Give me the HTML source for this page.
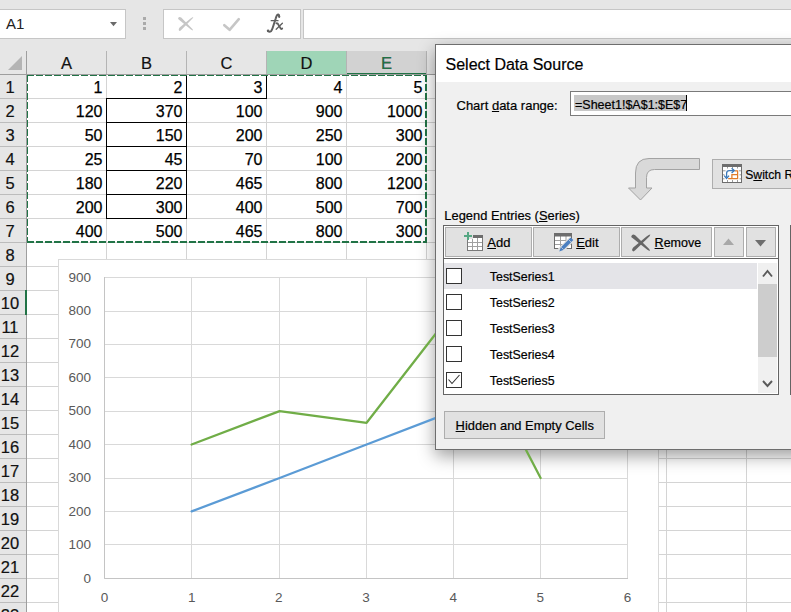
<!DOCTYPE html>
<html><head><meta charset="utf-8">
<style>
*{box-sizing:border-box;margin:0;padding:0}
html,body{width:791px;height:612px;overflow:hidden;background:#e6e6e6;font-family:"Liberation Sans",sans-serif;position:relative}
#sheet,#dlgsvg,#lines{position:absolute;left:0;top:0}
.hd{font-family:"Liberation Sans",sans-serif;font-size:16.5px;fill:#111;stroke:#111;stroke-width:0.2px}
.cv{font-family:"Liberation Sans",sans-serif;font-size:16px;fill:#000;stroke:#000;stroke-width:0.25px}
.ax{font-family:"Liberation Sans",sans-serif;font-size:13.5px;fill:#595959}
.abs{position:absolute}
.t{position:absolute;white-space:nowrap;-webkit-text-stroke:0.2px currentColor}
u{text-decoration:underline;text-underline-offset:1px;text-decoration-thickness:1px}
#namebox{position:absolute;left:-1px;top:9px;width:127px;height:30px;background:#fff;border:1px solid #c6c6c6}
#fbtns{position:absolute;left:163px;top:9px;width:138px;height:30px;background:#fff;border:1px solid #c6c6c6}
#finput{position:absolute;left:303px;top:9px;width:500px;height:30px;background:#fff;border:1px solid #c6c6c6}
#shadow{position:absolute;left:435px;top:44px;width:500px;height:406px;box-shadow:0 6px 16px rgba(0,0,0,.38)}
</style></head><body>
<svg id="sheet" width="791" height="612"><rect x="27" y="75" width="764" height="537" fill="#fff"/>
<rect x="0" y="51" width="791" height="23" fill="#e6e6e6"/>
<rect x="267" y="51" width="79" height="23" fill="#9fd5b7"/>
<rect x="347" y="51" width="79" height="23" fill="#d2d2d2"/>
<rect x="347" y="73" width="80" height="2" fill="#217346"/>
<rect x="0" y="75" width="26" height="537" fill="#e6e6e6"/>
<polygon points="8,70 22,70 22,56" fill="#b4b4b4"/>
<line x1="27" y1="98.5" x2="791" y2="98.5" stroke="#d4d4d4"/>
<line x1="0" y1="98.5" x2="26" y2="98.5" stroke="#bcbcbc"/>
<line x1="27" y1="122.5" x2="791" y2="122.5" stroke="#d4d4d4"/>
<line x1="0" y1="122.5" x2="26" y2="122.5" stroke="#bcbcbc"/>
<line x1="27" y1="146.5" x2="791" y2="146.5" stroke="#d4d4d4"/>
<line x1="0" y1="146.5" x2="26" y2="146.5" stroke="#bcbcbc"/>
<line x1="27" y1="170.5" x2="791" y2="170.5" stroke="#d4d4d4"/>
<line x1="0" y1="170.5" x2="26" y2="170.5" stroke="#bcbcbc"/>
<line x1="27" y1="194.5" x2="791" y2="194.5" stroke="#d4d4d4"/>
<line x1="0" y1="194.5" x2="26" y2="194.5" stroke="#bcbcbc"/>
<line x1="27" y1="218.5" x2="791" y2="218.5" stroke="#d4d4d4"/>
<line x1="0" y1="218.5" x2="26" y2="218.5" stroke="#bcbcbc"/>
<line x1="27" y1="242.5" x2="791" y2="242.5" stroke="#d4d4d4"/>
<line x1="0" y1="242.5" x2="26" y2="242.5" stroke="#bcbcbc"/>
<line x1="27" y1="266.5" x2="791" y2="266.5" stroke="#d4d4d4"/>
<line x1="0" y1="266.5" x2="26" y2="266.5" stroke="#bcbcbc"/>
<line x1="27" y1="290.5" x2="791" y2="290.5" stroke="#d4d4d4"/>
<line x1="0" y1="290.5" x2="26" y2="290.5" stroke="#bcbcbc"/>
<line x1="27" y1="314.5" x2="791" y2="314.5" stroke="#d4d4d4"/>
<line x1="0" y1="314.5" x2="26" y2="314.5" stroke="#bcbcbc"/>
<line x1="27" y1="338.5" x2="791" y2="338.5" stroke="#d4d4d4"/>
<line x1="0" y1="338.5" x2="26" y2="338.5" stroke="#bcbcbc"/>
<line x1="27" y1="362.5" x2="791" y2="362.5" stroke="#d4d4d4"/>
<line x1="0" y1="362.5" x2="26" y2="362.5" stroke="#bcbcbc"/>
<line x1="27" y1="386.5" x2="791" y2="386.5" stroke="#d4d4d4"/>
<line x1="0" y1="386.5" x2="26" y2="386.5" stroke="#bcbcbc"/>
<line x1="27" y1="410.5" x2="791" y2="410.5" stroke="#d4d4d4"/>
<line x1="0" y1="410.5" x2="26" y2="410.5" stroke="#bcbcbc"/>
<line x1="27" y1="434.5" x2="791" y2="434.5" stroke="#d4d4d4"/>
<line x1="0" y1="434.5" x2="26" y2="434.5" stroke="#bcbcbc"/>
<line x1="27" y1="458.5" x2="791" y2="458.5" stroke="#d4d4d4"/>
<line x1="0" y1="458.5" x2="26" y2="458.5" stroke="#bcbcbc"/>
<line x1="27" y1="482.5" x2="791" y2="482.5" stroke="#d4d4d4"/>
<line x1="0" y1="482.5" x2="26" y2="482.5" stroke="#bcbcbc"/>
<line x1="27" y1="506.5" x2="791" y2="506.5" stroke="#d4d4d4"/>
<line x1="0" y1="506.5" x2="26" y2="506.5" stroke="#bcbcbc"/>
<line x1="27" y1="530.5" x2="791" y2="530.5" stroke="#d4d4d4"/>
<line x1="0" y1="530.5" x2="26" y2="530.5" stroke="#bcbcbc"/>
<line x1="27" y1="554.5" x2="791" y2="554.5" stroke="#d4d4d4"/>
<line x1="0" y1="554.5" x2="26" y2="554.5" stroke="#bcbcbc"/>
<line x1="27" y1="578.5" x2="791" y2="578.5" stroke="#d4d4d4"/>
<line x1="0" y1="578.5" x2="26" y2="578.5" stroke="#bcbcbc"/>
<line x1="27" y1="602.5" x2="791" y2="602.5" stroke="#d4d4d4"/>
<line x1="0" y1="602.5" x2="26" y2="602.5" stroke="#bcbcbc"/>
<line x1="106.5" y1="75" x2="106.5" y2="612" stroke="#d4d4d4"/>
<line x1="106.5" y1="51" x2="106.5" y2="74" stroke="#b4b4b4"/>
<line x1="186.5" y1="75" x2="186.5" y2="612" stroke="#d4d4d4"/>
<line x1="186.5" y1="51" x2="186.5" y2="74" stroke="#b4b4b4"/>
<line x1="266.5" y1="75" x2="266.5" y2="612" stroke="#d4d4d4"/>
<line x1="266.5" y1="51" x2="266.5" y2="74" stroke="#b4b4b4"/>
<line x1="346.5" y1="75" x2="346.5" y2="612" stroke="#d4d4d4"/>
<line x1="346.5" y1="51" x2="346.5" y2="74" stroke="#b4b4b4"/>
<line x1="426.5" y1="75" x2="426.5" y2="612" stroke="#d4d4d4"/>
<line x1="426.5" y1="51" x2="426.5" y2="74" stroke="#b4b4b4"/>
<line x1="506.5" y1="75" x2="506.5" y2="612" stroke="#d4d4d4"/>
<line x1="506.5" y1="51" x2="506.5" y2="74" stroke="#b4b4b4"/>
<line x1="586.5" y1="75" x2="586.5" y2="612" stroke="#d4d4d4"/>
<line x1="586.5" y1="51" x2="586.5" y2="74" stroke="#b4b4b4"/>
<line x1="666.5" y1="75" x2="666.5" y2="612" stroke="#d4d4d4"/>
<line x1="666.5" y1="51" x2="666.5" y2="74" stroke="#b4b4b4"/>
<line x1="746.5" y1="75" x2="746.5" y2="612" stroke="#d4d4d4"/>
<line x1="746.5" y1="51" x2="746.5" y2="74" stroke="#b4b4b4"/>
<line x1="26.5" y1="51" x2="26.5" y2="612" stroke="#9e9e9e"/>
<line x1="0" y1="74.5" x2="791" y2="74.5" stroke="#9e9e9e"/>
<path d="M186.5 75V218.5 M106.5 98V218.5 M106 98.5H187 M106 122.5H187 M106 146.5H187 M106 170.5H187 M106 194.5H187 M106 218.5H187 M186 98.5H267 M266.5 75V99" stroke="#000" fill="none"/>
<text x="66.5" y="69" text-anchor="middle" class="hd">A</text>
<text x="146.5" y="69" text-anchor="middle" class="hd">B</text>
<text x="226.5" y="69" text-anchor="middle" class="hd">C</text>
<text x="306.5" y="69" text-anchor="middle" class="hd">D</text>
<text x="386.5" y="69" text-anchor="middle" class="hd" style="fill:#217346">E</text>
<text x="466.5" y="69" text-anchor="middle" class="hd">F</text>
<text x="546.5" y="69" text-anchor="middle" class="hd">G</text>
<text x="626.5" y="69" text-anchor="middle" class="hd">H</text>
<text x="706.5" y="69" text-anchor="middle" class="hd">I</text>
<text x="10" y="92.5" text-anchor="middle" class="hd">1</text>
<text x="10" y="116.5" text-anchor="middle" class="hd">2</text>
<text x="10" y="140.5" text-anchor="middle" class="hd">3</text>
<text x="10" y="164.5" text-anchor="middle" class="hd">4</text>
<text x="10" y="188.5" text-anchor="middle" class="hd">5</text>
<text x="10" y="212.5" text-anchor="middle" class="hd">6</text>
<text x="10" y="236.5" text-anchor="middle" class="hd">7</text>
<text x="10" y="260.5" text-anchor="middle" class="hd">8</text>
<text x="10" y="284.5" text-anchor="middle" class="hd">9</text>
<text x="10" y="308.5" text-anchor="middle" class="hd">10</text>
<text x="10" y="332.5" text-anchor="middle" class="hd">11</text>
<text x="10" y="356.5" text-anchor="middle" class="hd">12</text>
<text x="10" y="380.5" text-anchor="middle" class="hd">13</text>
<text x="10" y="404.5" text-anchor="middle" class="hd">14</text>
<text x="10" y="428.5" text-anchor="middle" class="hd">15</text>
<text x="10" y="452.5" text-anchor="middle" class="hd">16</text>
<text x="10" y="476.5" text-anchor="middle" class="hd">17</text>
<text x="10" y="500.5" text-anchor="middle" class="hd">18</text>
<text x="10" y="524.5" text-anchor="middle" class="hd">19</text>
<text x="10" y="548.5" text-anchor="middle" class="hd">20</text>
<text x="10" y="572.5" text-anchor="middle" class="hd">21</text>
<text x="10" y="596.5" text-anchor="middle" class="hd">22</text>
<text x="10" y="620.5" text-anchor="middle" class="hd">23</text>
<text x="102.5" y="93" text-anchor="end" class="cv">1</text>
<text x="182.5" y="93" text-anchor="end" class="cv">2</text>
<text x="262.5" y="93" text-anchor="end" class="cv">3</text>
<text x="342.5" y="93" text-anchor="end" class="cv">4</text>
<text x="422.5" y="93" text-anchor="end" class="cv">5</text>
<text x="102.5" y="117" text-anchor="end" class="cv">120</text>
<text x="182.5" y="117" text-anchor="end" class="cv">370</text>
<text x="262.5" y="117" text-anchor="end" class="cv">100</text>
<text x="342.5" y="117" text-anchor="end" class="cv">900</text>
<text x="422.5" y="117" text-anchor="end" class="cv">1000</text>
<text x="102.5" y="141" text-anchor="end" class="cv">50</text>
<text x="182.5" y="141" text-anchor="end" class="cv">150</text>
<text x="262.5" y="141" text-anchor="end" class="cv">200</text>
<text x="342.5" y="141" text-anchor="end" class="cv">250</text>
<text x="422.5" y="141" text-anchor="end" class="cv">300</text>
<text x="102.5" y="165" text-anchor="end" class="cv">25</text>
<text x="182.5" y="165" text-anchor="end" class="cv">45</text>
<text x="262.5" y="165" text-anchor="end" class="cv">70</text>
<text x="342.5" y="165" text-anchor="end" class="cv">100</text>
<text x="422.5" y="165" text-anchor="end" class="cv">200</text>
<text x="102.5" y="189" text-anchor="end" class="cv">180</text>
<text x="182.5" y="189" text-anchor="end" class="cv">220</text>
<text x="262.5" y="189" text-anchor="end" class="cv">465</text>
<text x="342.5" y="189" text-anchor="end" class="cv">800</text>
<text x="422.5" y="189" text-anchor="end" class="cv">1200</text>
<text x="102.5" y="213" text-anchor="end" class="cv">200</text>
<text x="182.5" y="213" text-anchor="end" class="cv">300</text>
<text x="262.5" y="213" text-anchor="end" class="cv">400</text>
<text x="342.5" y="213" text-anchor="end" class="cv">500</text>
<text x="422.5" y="213" text-anchor="end" class="cv">700</text>
<text x="102.5" y="237" text-anchor="end" class="cv">400</text>
<text x="182.5" y="237" text-anchor="end" class="cv">500</text>
<text x="262.5" y="237" text-anchor="end" class="cv">465</text>
<text x="342.5" y="237" text-anchor="end" class="cv">800</text>
<text x="422.5" y="237" text-anchor="end" class="cv">300</text>
<path d="M27 75.5H427M27.5 75V243" stroke="#217346" stroke-width="1" stroke-dasharray="7 2" fill="none"/>
<path d="M27 242H427M426 75V243" stroke="#217346" stroke-width="2" stroke-dasharray="7 2" fill="none"/>
<rect x="25" y="290" width="2" height="25" fill="#217346"/>
<rect x="58.5" y="259.5" width="600" height="400" fill="#fff" stroke="#d9d9d9"/>
<line x1="104" y1="578.5" x2="628" y2="578.5" stroke="#d9d9d9"/>
<text x="91" y="582.5" text-anchor="end" class="ax">0</text>
<line x1="104" y1="544.5" x2="628" y2="544.5" stroke="#d9d9d9"/>
<text x="91" y="549.0555555555555" text-anchor="end" class="ax">100</text>
<line x1="104" y1="511.5" x2="628" y2="511.5" stroke="#d9d9d9"/>
<text x="91" y="515.6111111111111" text-anchor="end" class="ax">200</text>
<line x1="104" y1="478.5" x2="628" y2="478.5" stroke="#d9d9d9"/>
<text x="91" y="482.1666666666667" text-anchor="end" class="ax">300</text>
<line x1="104" y1="444.5" x2="628" y2="444.5" stroke="#d9d9d9"/>
<text x="91" y="448.72222222222223" text-anchor="end" class="ax">400</text>
<line x1="104" y1="411.5" x2="628" y2="411.5" stroke="#d9d9d9"/>
<text x="91" y="415.27777777777777" text-anchor="end" class="ax">500</text>
<line x1="104" y1="377.5" x2="628" y2="377.5" stroke="#d9d9d9"/>
<text x="91" y="381.83333333333337" text-anchor="end" class="ax">600</text>
<line x1="104" y1="344.5" x2="628" y2="344.5" stroke="#d9d9d9"/>
<text x="91" y="348.3888888888889" text-anchor="end" class="ax">700</text>
<line x1="104" y1="311.5" x2="628" y2="311.5" stroke="#d9d9d9"/>
<text x="91" y="314.94444444444446" text-anchor="end" class="ax">800</text>
<line x1="104" y1="277.5" x2="628" y2="277.5" stroke="#d9d9d9"/>
<text x="91" y="281.5" text-anchor="end" class="ax">900</text>
<line x1="104.5" y1="277" x2="104.5" y2="579" stroke="#d9d9d9"/>
<text x="104.5" y="602" text-anchor="middle" class="ax">0</text>
<line x1="191.5" y1="277" x2="191.5" y2="579" stroke="#d9d9d9"/>
<text x="191.66666666666669" y="602" text-anchor="middle" class="ax">1</text>
<line x1="279.5" y1="277" x2="279.5" y2="579" stroke="#d9d9d9"/>
<text x="278.83333333333337" y="602" text-anchor="middle" class="ax">2</text>
<line x1="366.5" y1="277" x2="366.5" y2="579" stroke="#d9d9d9"/>
<text x="366.0" y="602" text-anchor="middle" class="ax">3</text>
<line x1="453.5" y1="277" x2="453.5" y2="579" stroke="#d9d9d9"/>
<text x="453.1666666666667" y="602" text-anchor="middle" class="ax">4</text>
<line x1="540.5" y1="277" x2="540.5" y2="579" stroke="#d9d9d9"/>
<text x="540.3333333333333" y="602" text-anchor="middle" class="ax">5</text>
<line x1="627.5" y1="277" x2="627.5" y2="579" stroke="#d9d9d9"/>
<text x="627.5" y="602" text-anchor="middle" class="ax">6</text>
<path d="M104.5 277V578.5H628" stroke="#c4c4c4" fill="none"/></svg>
<div id="namebox"><span class="abs" style="left:6px;top:6.4px;font-size:15px;line-height:15px;color:#222">A1</span>
<svg class="abs" style="left:110px;top:12px" width="8" height="5"><polygon points="0,0 7,0 3.5,4.3" fill="#6a6a6a"/></svg></div>
<svg class="abs" style="left:143px;top:17px" width="3" height="13"><rect y="0" width="3" height="3" fill="#aaa"/><rect y="5" width="3" height="3" fill="#aaa"/><rect y="10" width="3" height="3" fill="#aaa"/></svg>
<div id="fbtns">
<svg class="abs" style="left:-164px;top:-10px" width="300" height="45"><g transform="translate(178.1 17) scale(0.8 0.83) translate(-631.3 -234.6)" fill="#c6c6c6">
<path d="M631.3 236.2Q632.5 233.3 635.2 235.3L649.2 249Q650.3 250.5 649.6 251L647.3 249.8L632.8 238.3Q630.8 237.2 631.3 236.2Z"/>
<path d="M650.3 234.6L649.6 236.2L635.2 250.3Q633.2 252.3 632.2 250.6Q631.6 249.3 633.2 247.4L646.5 236.6Q649.4 234.4 650.3 234.6Z"/></g>
<path d="M224.3 25.2L229.6 29.8L238.8 19.2" stroke="#c6c6c6" stroke-width="2.6" fill="none" stroke-linecap="round" stroke-linejoin="round"/></svg>

<svg class="abs" style="left:-164px;top:-10px" width="300" height="45"><g fill="none" stroke="#5f5f5f" stroke-linecap="round">
<path d="M268 31.2Q269.5 32.3 271 31.2Q272 30.2 272.8 27.5L275.8 18.2Q276.8 14.6 278.3 14.6Q279.3 14.8 279.2 16.4" stroke-width="2"/>
<path d="M271.2 20.7H278" stroke-width="1.3"/>
<path d="M276.4 23.3Q277.6 22.9 278.6 25L280.8 28.7Q281.4 29.3 282.2 28.5" stroke-width="1.8"/>
<path d="M282.4 23.3L276.2 29.3" stroke-width="1.3"/>
</g><circle cx="268.1" cy="30.8" r="1.3" fill="#5f5f5f"/><circle cx="279.2" cy="16.8" r="1.1" fill="#5f5f5f"/></svg>
</div>
<div id="finput"></div>
<div id="shadow"></div>
<svg id="lines" width="791" height="612"><polyline fill="none" stroke="#5b9bd5" stroke-width="2.25" stroke-linejoin="round" stroke-linecap="round" points="191.6,511.4 279.6,478.0 366.6,444.5 453.6,411.1 540.6,344.2"/>
<polyline fill="none" stroke="#70ad47" stroke-width="2.25" stroke-linejoin="round" stroke-linecap="round" points="191.6,444.5 279.6,411.1 366.6,422.8 453.6,310.7 540.6,478.0"/></svg>
<svg id="dlgsvg" width="791" height="612"><rect x="435.5" y="44.5" width="465" height="405" fill="#f0f0f0" stroke="#6e6e6e"/>
<rect x="436" y="45" width="460" height="37" fill="#fff" />
<rect x="570.5" y="91.5" width="330" height="24" fill="#fff" stroke="#7a7a7a"/>
<rect x="574" y="95" width="112" height="16" fill="#c8c8c8" />
<rect x="686" y="95" width="1" height="16" fill="#000" />
<path d="M649 158.5H699.5V169.5H654.5Q646.5 169.5 646.5 177.5V188H652L640.5 200L628.5 188H635.5V173Q635.5 158.5 649 158.5Z" fill="#d9d9d9" stroke="#a3a3a3"/>
<rect x="712.5" y="159.5" width="188" height="29" fill="#e1e1e1" stroke="#adadad"/>
<g><rect x="722.5" y="164.5" width="19" height="18" fill="#fff" stroke="#6d6d6d"/><rect x="722" y="164" width="20" height="3" fill="#6d6d6d"/><path d="M723 170.8H725.5M739 170.8H741M723 174.8H724.5M739.5 174.8H741M723 178.8H724.5M739.5 178.8H741" stroke="#9a9a9a"/><path d="M727.5 167V168.5M732.5 167V168.5M737.5 167V168.5M727.5 180V182M732.5 180V182M737.5 180V182" stroke="#9a9a9a"/><path d="M737.6 170.2V178.6H728.2M737.6 174.5H731.9V178.6M734.5 170.8H737.6" stroke="#e07b28" stroke-width="1.25" fill="none"/><path d="M733.8 170.6H729.3Q726.6 170.6 726.6 173.3V177.6" stroke="#3b78b8" stroke-width="1.3" fill="none"/><path d="M731.6 168.2L734.3 170.6L731.6 173M724.2 175.6L726.6 178.4L729 175.6" stroke="#3b78b8" stroke-width="1.3" fill="none"/></g>
<rect x="443.5" y="225.5" width="335" height="169" fill="#fff" stroke="#646464"/>
<rect x="444" y="258" width="334" height="1" fill="#646464" />
<rect x="445.5" y="227.5" width="86" height="29" fill="#e1e1e1" stroke="#adadad"/>
<rect x="533.5" y="227.5" width="86" height="29" fill="#e1e1e1" stroke="#adadad"/>
<rect x="621.5" y="227.5" width="90" height="29" fill="#e1e1e1" stroke="#adadad"/>
<rect x="714.5" y="227.5" width="29" height="29" fill="#e1e1e1" stroke="#adadad"/>
<rect x="746.5" y="227.5" width="29" height="29" fill="#e1e1e1" stroke="#adadad"/>
<g><rect x="467.5" y="235.5" width="15" height="15" fill="#fff" stroke="#7a7a7a"/><path d="M472.5 238V250M477.5 238V250M468 242.5H482M468 246.5H482" stroke="#a0a0a0"/><rect x="467" y="235" width="16" height="3" fill="#6d6d6d"/><rect x="463" y="233" width="10" height="6" fill="#e1e1e1"/><path d="M468 232V240M464 236H472" stroke="#55a783" stroke-width="2"/></g>
<g><rect x="554.5" y="233.5" width="17" height="15" fill="#fff" stroke="#6d6d6d"/><path d="M560.5 236V248M566 236V248M555 240.5H571M555 244.5H571" stroke="#a0a0a0"/><rect x="554" y="233" width="18" height="3.5" fill="#6d6d6d"/><path d="M559.8 251.2L571.6 239.4" stroke="#e1e1e1" stroke-width="6"/><polygon points="559.3,251.5 563.3,250.1 573.3,240.1 570.7,237.5 560.7,247.5" fill="#4a7fc1"/><path d="M568.6 239.6L571.2 242.2M561.2 247.2L563.7 249.7" stroke="#e1e1e1" stroke-width="0.7"/></g>
<path d="M631.3 236.2Q632.5 233.3 635.2 235.3L649.2 249Q650.3 250.5 649.6 251L647.3 249.8L632.8 238.3Q630.8 237.2 631.3 236.2Z" fill="#666"/>
<path d="M650.3 234.6L649.6 236.2L635.2 250.3Q633.2 252.3 632.2 250.6Q631.6 249.3 633.2 247.4L646.5 236.6Q649.4 234.4 650.3 234.6Z" fill="#666"/>
<polygon points="723,245 734,245 728.5,238.5" fill="#a8a8a8"/>
<polygon points="755,240 766,240 760.5,246.5" fill="#6e6e6e"/>
<rect x="444" y="263" width="313" height="26" fill="#e4e4e8" />
<rect x="446.5" y="268.5" width="15" height="15" fill="#fff" stroke="#333"/>
<rect x="446.5" y="294.5" width="15" height="15" fill="#fff" stroke="#333"/>
<rect x="446.5" y="320.5" width="15" height="15" fill="#fff" stroke="#333"/>
<rect x="446.5" y="346.5" width="15" height="15" fill="#fff" stroke="#333"/>
<rect x="446.5" y="372.5" width="15" height="15" fill="#fff" stroke="#333"/>
<path d="M448.5 379.5L452 383.5L459.5 375" stroke="#333" stroke-width="1.1" fill="none"/>
<rect x="758" y="263" width="19" height="130" fill="#f0f0f0" />
<rect x="758" y="284" width="19" height="73" fill="#cdcdcd" />
<path d="M763 276.5L767.5 271L772 276.5M763 381L767.5 386L772 381" stroke="#5a5a5a" stroke-width="1.9" fill="none"/>
<rect x="790" y="225" width="1" height="170" fill="#646464" />
<rect x="444.5" y="411.5" width="160" height="27" fill="#e1e1e1" stroke="#adadad"/></svg>
<span class="t" style="left:445.5px;top:57.46px;font-size:16px;line-height:16px;color:#000;">Select Data Source</span><span class="t" style="left:456.5px;top:99.00px;font-size:13px;line-height:13px;color:#000;">Chart <u>d</u>ata range:</span><span class="t" style="left:575px;top:99.32px;font-size:12.5px;line-height:12.5px;color:#000;">=Sheet1!$A$1:$E$7</span><span class="t" style="left:745.2px;top:168.87px;font-size:12.2px;line-height:12.2px;color:#000;">S<u>w</u>itch Row/Column</span><span class="t" style="left:444.3px;top:210.08px;font-size:12.9px;line-height:12.9px;color:#000;">Legend Entries (<u>S</u>eries)</span><span class="t" style="left:487.3px;top:235.50px;font-size:13px;line-height:13px;color:#000;"><u>A</u>dd</span><span class="t" style="left:576.2px;top:235.50px;font-size:13px;line-height:13px;color:#000;"><u>E</u>dit</span><span class="t" style="left:654.6px;top:236.92px;font-size:12.5px;line-height:12.5px;color:#000;"><u>R</u>emove</span><span class="t" style="left:489.8px;top:270.50px;font-size:12.4px;line-height:12.4px;color:#000;">TestSeries1</span><span class="t" style="left:489.8px;top:296.50px;font-size:12.4px;line-height:12.4px;color:#000;">TestSeries2</span><span class="t" style="left:489.8px;top:322.50px;font-size:12.4px;line-height:12.4px;color:#000;">TestSeries3</span><span class="t" style="left:489.8px;top:348.50px;font-size:12.4px;line-height:12.4px;color:#000;">TestSeries4</span><span class="t" style="left:489.8px;top:374.50px;font-size:12.4px;line-height:12.4px;color:#000;">TestSeries5</span><span class="t" style="left:455.6px;top:419.88px;font-size:12.9px;line-height:12.9px;color:#000;"><u>H</u>idden and Empty Cells</span>
</body></html>
